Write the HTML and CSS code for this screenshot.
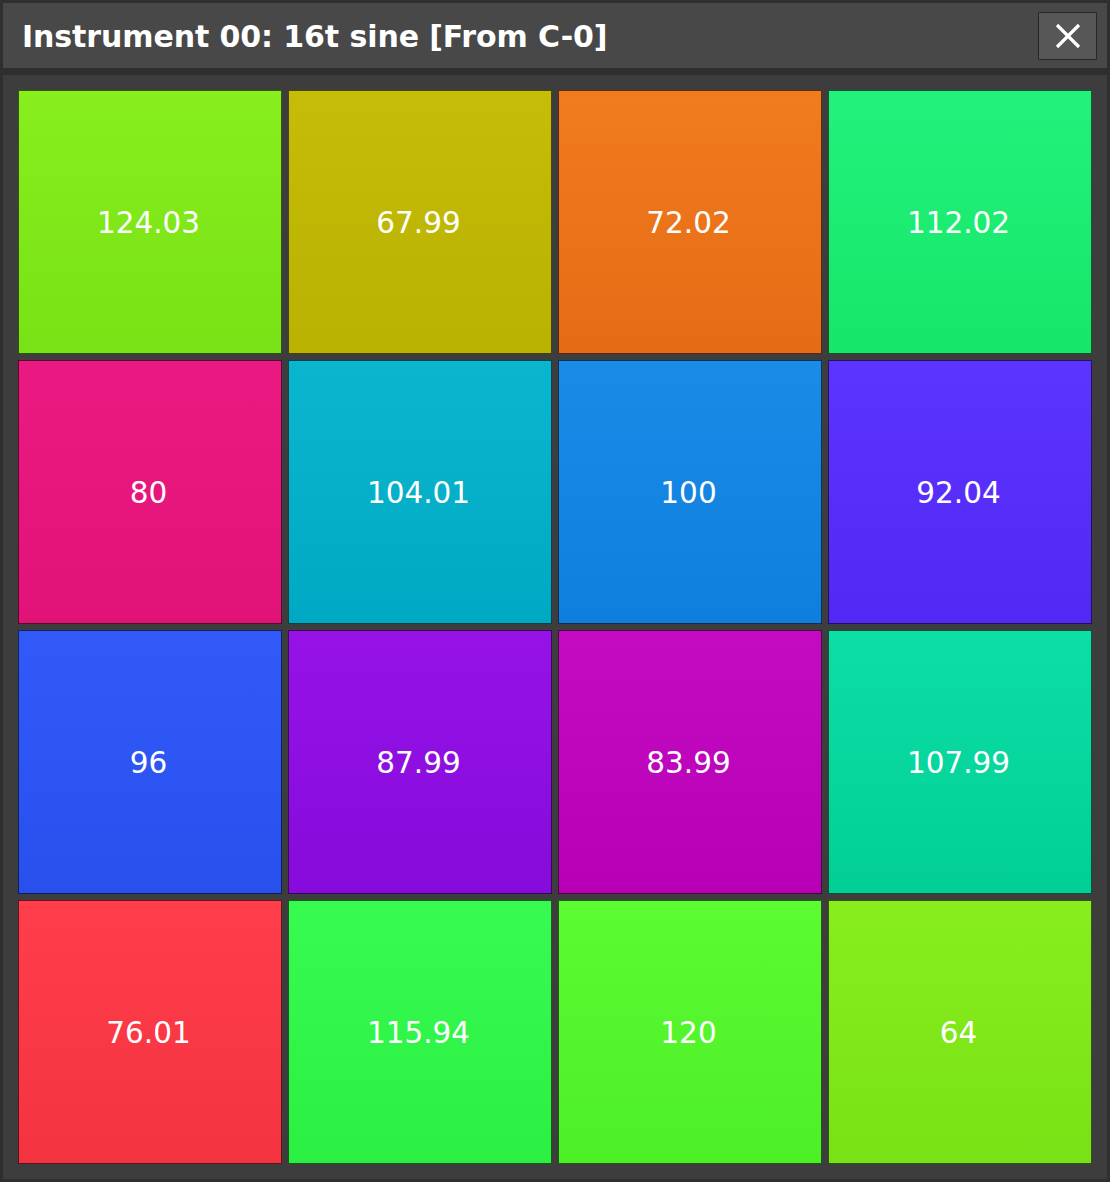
FILE: index.html
```html
<!DOCTYPE html>
<html>
<head>
<meta charset="utf-8">
<link rel="stylesheet" href="styles.css">
</head>
<body>
<div class="window">
  <div class="titlebar">
    <div class="title">Instrument 00: 16t sine [From C-0]</div>
    <button class="close" aria-label="Close">
      <svg width="26" height="26" viewBox="0 0 26 26"><path d="M2 2 L24 24 M24 2 L2 24" stroke="#fff" stroke-width="3.2" stroke-linecap="butt"/></svg>
    </button>
  </div>
  <div class="sep"></div>
  <div class="body">
    <div class="grid">
      <div class="tile c1">124.03</div>
      <div class="tile c2">67.99</div>
      <div class="tile c3">72.02</div>
      <div class="tile c4">112.02</div>
      <div class="tile c5">80</div>
      <div class="tile c6">104.01</div>
      <div class="tile c7">100</div>
      <div class="tile c8">92.04</div>
      <div class="tile c9">96</div>
      <div class="tile c10">87.99</div>
      <div class="tile c11">83.99</div>
      <div class="tile c12">107.99</div>
      <div class="tile c13">76.01</div>
      <div class="tile c14">115.94</div>
      <div class="tile c15">120</div>
      <div class="tile c16">64</div>
    </div>
  </div>
</div>
</body>
</html>
```
FILE: styles.css
```css
html, body {
  margin: 0;
  padding: 0;
  background: #2e2e2e;
}
.window {
  width: 1110px;
  height: 1182px;
  box-sizing: border-box;
  border: 3px solid #2f2f2f;
  background: #3d3d3d;
  display: flex;
  flex-direction: column;
  font-family: "DejaVu Sans", sans-serif;
}
.titlebar {
  height: 65px;
  background: #484848;
  display: flex;
  align-items: center;
  justify-content: space-between;
  padding: 0 10px 0 19px;
  box-sizing: border-box;
}
.title {
  color: #ffffff;
  font-weight: bold;
  font-size: 30px;
  letter-spacing: -0.1px;
  margin-top: 1px;
}
.close {
  width: 59px;
  height: 48px;
  box-sizing: border-box;
  background: #575757;
  border: 1px solid #262626;
  border-radius: 1px;
  padding: 0;
  display: flex;
  align-items: center;
  justify-content: center;
  margin-top: 1px;
}
.sep {
  height: 7px;
  background: #2e2e2e;
}
.body {
  flex: 1;
  padding: 15px;
}
.grid {
  display: grid;
  grid-template-columns: repeat(4, 264px);
  grid-template-rows: repeat(4, 264px);
  gap: 6px;
}
.tile {
  display: flex;
  align-items: center;
  justify-content: center;
  color: #ffffff;
  font-size: 29.5px;
  box-shadow: inset 0 0 0 1px rgba(0, 0, 0, 0.62);
  padding: 2px 3px 0 0;
  box-sizing: border-box;
}
.c1  { background: linear-gradient(#88ee1d, #78e216); }
.c2  { background: linear-gradient(#c6bc0a, #b9b200); }
.c3  { background: linear-gradient(#f17b1f, #e56c15); }
.c4  { background: linear-gradient(#22f17c, #16e768); }
.c5  { background: linear-gradient(#eb1a82, #e11278); }
.c6  { background: linear-gradient(#0ab6cd, #00a9c3); }
.c7  { background: linear-gradient(#1a8be7, #0e7fdd); }
.c8  { background: linear-gradient(#5c34ff, #5229f4); }
.c9  { background: linear-gradient(#325af9, #2850ed); }
.c10 { background: linear-gradient(#9612e7, #870bdb); }
.c11 { background: linear-gradient(#c40bc2, #b700b5); }
.c12 { background: linear-gradient(#0ddea6, #01cf95); }
.c13 { background: linear-gradient(#ff3d4b, #f43341); }
.c14 { background: linear-gradient(#38fb52, #2cef43); }
.c15 { background: linear-gradient(#5cfb32, #4def27); }
.c16 { background: linear-gradient(#88ee1d, #78e216); }
```
